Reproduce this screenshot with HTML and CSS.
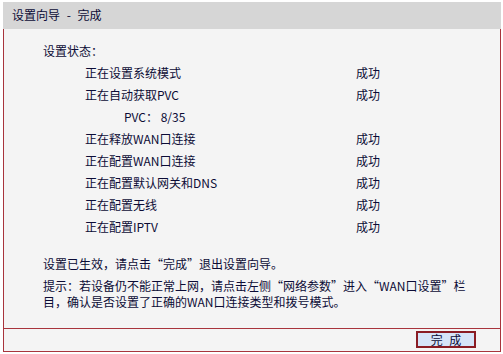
FILE: index.html
```html
<!DOCTYPE html>
<html lang="zh-CN">
<head>
    <meta charset="UTF-8">
    <title>设置向导 - 完成</title>
    <link rel="stylesheet" href="styles.css">
</head>
<body>
    <div class="wizard">
        <div class="title">设置向导 - 完成</div>
        <div class="panel">
            <div class="content">
                <div class="line">设置状态：</div>
                <div class="row"><span class="label">正在设置系统模式</span><span>成功</span></div>
                <div class="row"><span class="label">正在自动获取PVC</span><span>成功</span></div>
                <div class="line pvc">PVC： 8/35</div>
                <div class="row"><span class="label">正在释放WAN口连接</span><span>成功</span></div>
                <div class="row"><span class="label">正在配置WAN口连接</span><span>成功</span></div>
                <div class="row"><span class="label">正在配置默认网关和DNS</span><span>成功</span></div>
                <div class="row"><span class="label">正在配置无线</span><span>成功</span></div>
                <div class="row"><span class="label">正在配置IPTV</span><span>成功</span></div>

                <div class="line done">设置已生效，请点击“完成”退出设置向导。</div>
                <p class="note">提示：若设备仍不能正常上网，请点击左侧“网络参数”进入“WAN口设置”栏<br>目，确认是否设置了正确的WAN口连接类型和拨号模式。</p>
            </div>
            <div class="footer">
                <button class="finish">完 成</button>
            </div>
        </div>
    </div>
</body>
</html>
```

FILE: styles.css
```css
body {
    margin: 0;
    background-color: #ffffff;
    font-family: "Noto Sans CJK SC", "Liberation Sans", sans-serif;
    font-size: 12px;
    color: #0c0c36;
}
.wizard {
    margin: 2px 0 0 3px;
    width: 498px;
}
.title {
    height: 27px;
    line-height: 26px;
    padding-left: 9px;
    background-color: #d6d6d6;
    word-spacing: 4px;
}
.panel {
    border-left: 1px solid #a8343c;
    border-right: 1px solid #a8343c;
    border-bottom: 1px solid #a8343c;
    background-color: #f4f4f4;
}
.content {
    height: 288px;
    padding: 11px 0 0 39px;
}
.line {
    line-height: 22px;
}
.row {
    display: flex;
    line-height: 22px;
    padding-left: 42px;
}
.label {
    width: 271px;
}
.pvc {
    padding-left: 81px;
}
.done {
    margin-top: 15px;
}
.note {
    margin: 3px 0 0;
    line-height: 16px;
}
.footer {
    height: 22px;
    border-top: 1px solid #a8343c;
    display: flex;
    justify-content: flex-end;
    align-items: flex-start;
    padding-right: 24px;
}
.finish {
    margin-top: 2px;
    width: 60px;
    height: 17px;
    padding: 0;
    border: 2px solid #8a1c24;
    background-color: #d6e4f8;
    font-family: "Noto Sans CJK SC", sans-serif;
    font-size: 12px;
    line-height: 13px;
    color: #0c0c36;
    word-spacing: 4px;
}
```
